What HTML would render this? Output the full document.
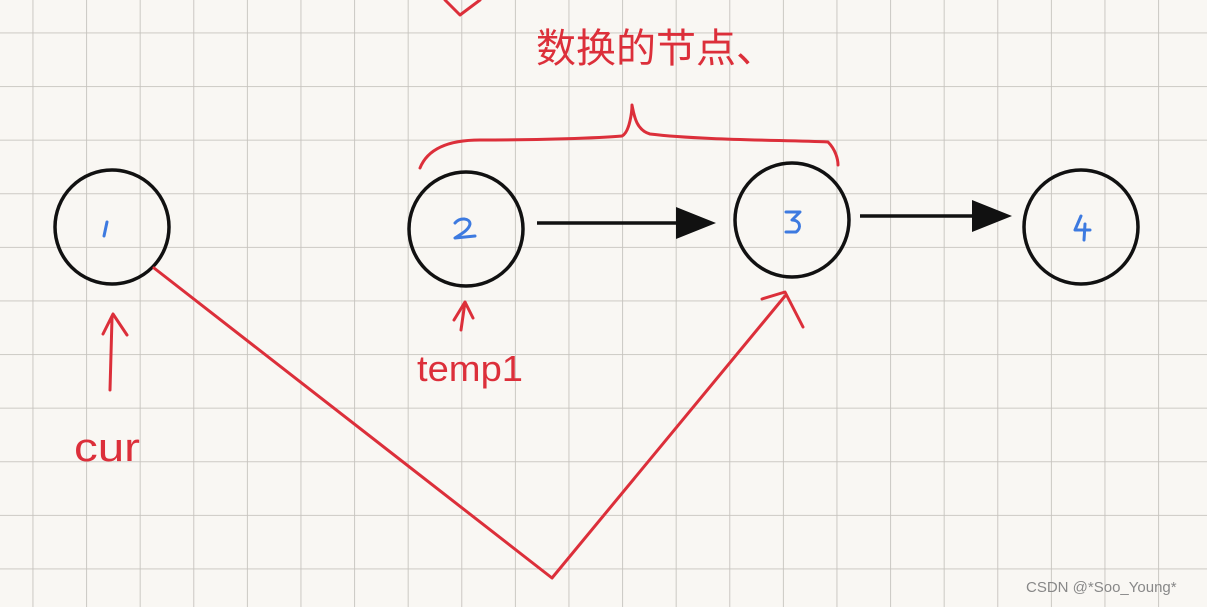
<!DOCTYPE html>
<html><head><meta charset="utf-8"><style>
html,body{margin:0;padding:0;width:1207px;height:607px;overflow:hidden;background:#f9f7f3}
svg{display:block}
</style></head><body>
<svg width="1207" height="607" viewBox="0 0 1207 607" xmlns="http://www.w3.org/2000/svg">
<defs>
<pattern id="g" x="32.5" y="32.5" width="53.6" height="53.6" patternUnits="userSpaceOnUse">
<path d="M0 0H53.6M0 0V53.6" stroke="#c6c3be" stroke-width="1.8" fill="none"/>
</pattern>
</defs>
<rect width="1207" height="607" fill="#f9f7f3"/>
<rect width="1207" height="607" fill="url(#g)"/>
<g fill="none" stroke="#111" stroke-width="3.5">
<circle cx="112" cy="227" r="57"/>
<circle cx="466" cy="229" r="57"/>
<circle cx="792" cy="220" r="57"/>
<circle cx="1081" cy="227" r="57"/>
<path d="M537 223H690"/>
<path d="M860 216H985"/>
</g>
<path d="M676 207L716 223L676 239Z" fill="#111"/>
<path d="M972 200L1012 216L972 232Z" fill="#111"/>
<g fill="none" stroke="#3d7ae0" stroke-width="3" stroke-linecap="round" stroke-linejoin="round">
<path d="M104 236L107 222"/>
<path d="M455 223C460 217 470 218 470 224C469 230 461 234 455 238L475 236"/>
<path d="M786 212L800 212L792 220C800 220 802 228 796 232L786 232"/>
<path d="M1081 216L1075 230L1090 230M1085 224L1084 240"/>
</g>
<g fill="none" stroke="#dc2f3a" stroke-width="3" stroke-linecap="round" stroke-linejoin="round">
<path d="M154 268L552 578L785 296"/>
<path d="M762 299L785 292L803 327"/>
<path d="M110 390L112 318M103 334L113 314L127 335"/>
<path d="M461 330L465 302M454 320L465 302L473 318"/>
<path d="M420 168C428 148 450 140 480 140C540 140 600 138 622 136C630 132 632 110 632 105C634 115 636 130 650 134C700 140 780 140 828 142C836 150 838 160 838 165"/>
<path d="M445 0L460 15L480 0"/>
</g>
<g fill="#dc2f3a" font-family="Liberation Sans, sans-serif">
<text x="74" y="461" font-size="40" textLength="66" lengthAdjust="spacingAndGlyphs">cur</text>
<text x="417" y="381" font-size="36" textLength="106" lengthAdjust="spacingAndGlyphs">temp1</text>
</g>
<text x="536" y="62" fill="#dc2f3a" font-family="Liberation Sans, Noto Sans CJK SC, sans-serif" font-size="40">数换的节点、</text>
<text x="1026" y="592" fill="#888" font-family="Liberation Sans, sans-serif" font-size="15">CSDN @*Soo_Young*</text>
</svg>
</body></html>
